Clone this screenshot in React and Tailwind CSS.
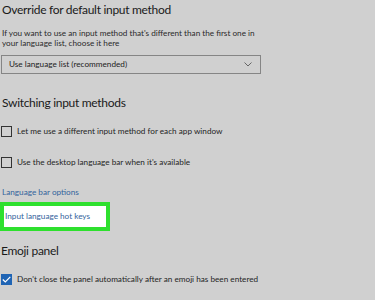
export default function App() {
  return (
    <div className="w-[375px] h-[300px] overflow-hidden bg-[#d0d0d0] text-[#1f1f1f]" style={{ fontFamily: 'Lato, "Open Sans", sans-serif' }}>
      <div className="pl-[2px]">
        <h2 className="text-[12px] tracking-[-0.3px] leading-[20px] h-[20px] text-[#1a1a1a]">Override for default input method</h2>
        <p className="mt-[8px] text-[8.2px] leading-[10px] whitespace-nowrap text-[#2a2a2a]">
          <span className="block">If you want to use an input method that&apos;s different than the first one in</span>
          <span className="block">your language list, choose it here</span>
        </p>
        <div className="mt-[7px] -ml-[1px] w-[260px] h-[19px] border border-[#858585] flex items-center justify-between pl-[7px] pr-[8px]">
          <span className="text-[8.2px] text-[#222]">Use language list (recommended)</span>
          <svg width="8" height="5" viewBox="0 0 8 5" fill="none" stroke="#666" strokeWidth="1">
            <path d="M0.5 0.5 L4 4 L7.5 0.5" />
          </svg>
        </div>
        <h2 className="mt-[19px] text-[12px] tracking-[-0.3px] leading-[20px] h-[20px] text-[#1a1a1a]">Switching input methods</h2>
        <label className="mt-[12px] h-[12px] flex items-center gap-[5px] -ml-[1px]">
          <span className="w-[11px] h-[11px] border border-[#333]" />
          <span className="text-[8.2px]">Let me use a different input method for each app window</span>
        </label>
        <label className="mt-[19px] h-[12px] flex items-center gap-[5px] -ml-[1px]">
          <span className="w-[11px] h-[11px] border border-[#333]" />
          <span className="text-[8.2px]">Use the desktop language bar when it&apos;s available</span>
        </label>
        <div className="mt-[19px] text-[8.2px] text-[#33649c] leading-[10px] h-[10px]">Language bar options</div>
      </div>
      <div className="mt-[5px] w-[110px] h-[29px] border-[4px] border-[#2ee02e] bg-white flex items-center">
        <span className="text-[8.2px] text-[#33649c] pl-[1px]">Input language hot keys</span>
      </div>
      <h2 className="mt-[10px] text-[12px] tracking-[-0.3px] leading-[20px] h-[20px] pl-[1px] text-[#1a1a1a]">Emoji panel</h2>
      <label className="mt-[12px] h-[12px] flex items-center gap-[5px] pl-[1px]">
        <span className="w-[11px] h-[11px] bg-[#1f64b4] flex items-center justify-center">
          <svg width="9" height="7" viewBox="0 0 9 7" fill="none" stroke="white" strokeWidth="1.2">
            <path d="M0.8 3.5 L3.3 6 L8.3 0.8" />
          </svg>
        </span>
        <span className="text-[8.2px]">Don&apos;t close the panel automatically after an emoji has been entered</span>
      </label>
    </div>
  );
}
